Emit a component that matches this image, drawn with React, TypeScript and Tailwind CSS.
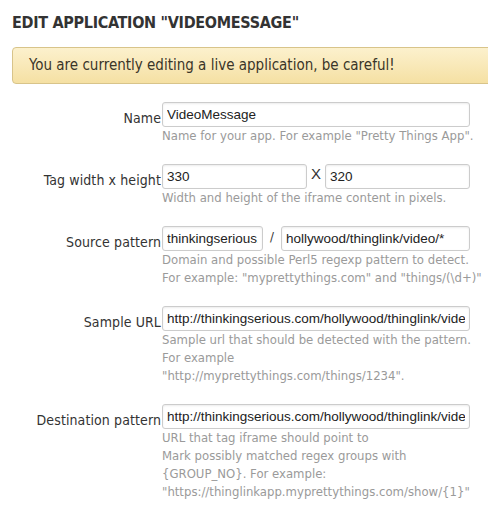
import type { ReactNode } from "react";

const inputCls =
  "block h-[25px] rounded-[3px] border border-[#cccccc] bg-white px-[4px] text-[13.5px] text-[#222] shadow-[inset_0_1px_2px_rgba(0,0,0,0.08)] outline-none font-['Liberation_Sans',Arial,sans-serif]";

function Row({ label, children, help }: { label: string; children: ReactNode; help: string[] }) {
  return (
    <div className="flex mb-[19px]">
      <div className="w-[161px] shrink-0 text-right pt-[4px] text-[14px] text-[#333] leading-[24px] tracking-[0.1px]">
        {label}
      </div>
      <div className="w-[308px] ml-[1px]">
        {children}
        <div className="text-[13px] leading-[18px] text-[#9a9a9a]">
          {help.map((h, i) => (
            <div key={i} className="whitespace-nowrap">
              {h}
            </div>
          ))}
        </div>
      </div>
    </div>
  );
}

export default function App() {
  return (
    <div className="min-h-[513px] w-[488px] overflow-hidden bg-white font-['DejaVu_Sans_Condensed','DejaVu_Sans',sans-serif]">
      <h1 className="pl-[12px] pt-[13px] text-[16px] font-bold leading-[20px] text-[#333] tracking-[-0.3px]">
        EDIT APPLICATION "VIDEOMESSAGE"
      </h1>
      <div className="mt-[14px] ml-[12px] w-[500px] h-[37px] rounded-[4px] border border-[#d8c48a] bg-gradient-to-b from-[#fcf1cd] to-[#f5e0a3] pl-[16px] flex items-center text-[15px] text-[#3a3529]">
        You are currently editing a live application, be careful!
      </div>
      <div className="mt-[18px]">
        <Row label="Name" help={['Name for your app. For example "Pretty Things App".']}>
          <input className={`${inputCls} w-[308px]`} defaultValue="VideoMessage" />
        </Row>
        <Row label="Tag width x height" help={["Width and height of the iframe content in pixels."]}>
          <div className="flex items-center">
            <input className={`${inputCls} w-[145px]`} defaultValue="330" />
            <span className="w-[18px] text-center text-[15px] text-[#333] font-['Liberation_Sans',Arial,sans-serif] -mt-[4px]">
              X
            </span>
            <input className={`${inputCls} w-[145px]`} defaultValue="320" />
          </div>
        </Row>
        <Row
          label="Source pattern"
          help={[
            "Domain and possible Perl5 regexp pattern to detect.",
            'For example: "myprettythings.com" and "things/(\\d+)"',
          ]}
        >
          <div className="flex items-center">
            <input className={`${inputCls} w-[101px]`} defaultValue="thinkingserious.com" />
            <span className="w-[18px] text-center text-[13px] text-[#333] -mt-[4px]">/</span>
            <input className={`${inputCls} w-[190px]`} defaultValue="hollywood/thinglink/video/*" />
          </div>
        </Row>
        <Row
          label="Sample URL"
          help={[
            "Sample url that should be detected with the pattern.",
            "For example",
            '"http://myprettythings.com/things/1234".',
          ]}
        >
          <input
            className={`${inputCls} w-[308px]`}
            defaultValue="http://thinkingserious.com/hollywood/thinglink/video/1234"
          />
        </Row>
        <Row
          label="Destination pattern"
          help={[
            "URL that tag iframe should point to",
            "Mark possibly matched regex groups with",
            "{GROUP_NO}. For example:",
            '"https://thinglinkapp.myprettythings.com/show/{1}"',
          ]}
        >
          <input
            className={`${inputCls} w-[308px]`}
            defaultValue="http://thinkingserious.com/hollywood/thinglink/video/{1}"
          />
        </Row>
      </div>
    </div>
  );
}
